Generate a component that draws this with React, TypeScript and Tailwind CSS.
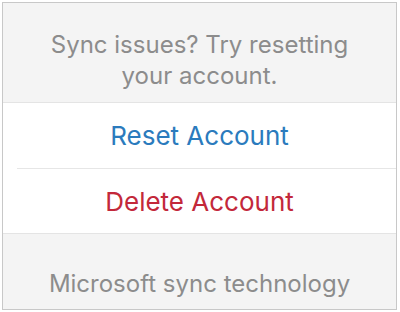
export default function App() {
  return (
    <div className="h-[312px] w-[400px] overflow-hidden bg-white pl-[2px] pt-[2px] font-['Inter',sans-serif]">
      <div className="flex h-[308px] w-[395px] flex-col overflow-hidden border border-[#c8c8c8] bg-[#f4f4f4]">
        <section className="h-[100px] shrink-0 border-b border-[#e4e4e4] pt-[26px] text-center text-[24px] leading-[31px] text-[#8c8c8c]">
          <p>Sync issues? Try resetting</p>
          <p>your account.</p>
        </section>

        <div className="shrink-0 bg-white">
          <button className="flex h-[65px] w-full items-center justify-center text-[26px] text-[#2b7bbd]">
            Reset Account
          </button>
          <div className="ml-[14px] h-px bg-[#e6e6e6]" />
          <button className="flex h-[64px] w-full items-center justify-center text-[26px] text-[#c3283a]">
            Delete Account
          </button>
        </div>

        <section className="flex-1 border-t border-[#e4e4e4] pt-[35px] text-center text-[24px] leading-[30px] text-[#8c8c8c]">
          <p>Microsoft sync technology</p>
        </section>
      </div>
    </div>
  );
}
